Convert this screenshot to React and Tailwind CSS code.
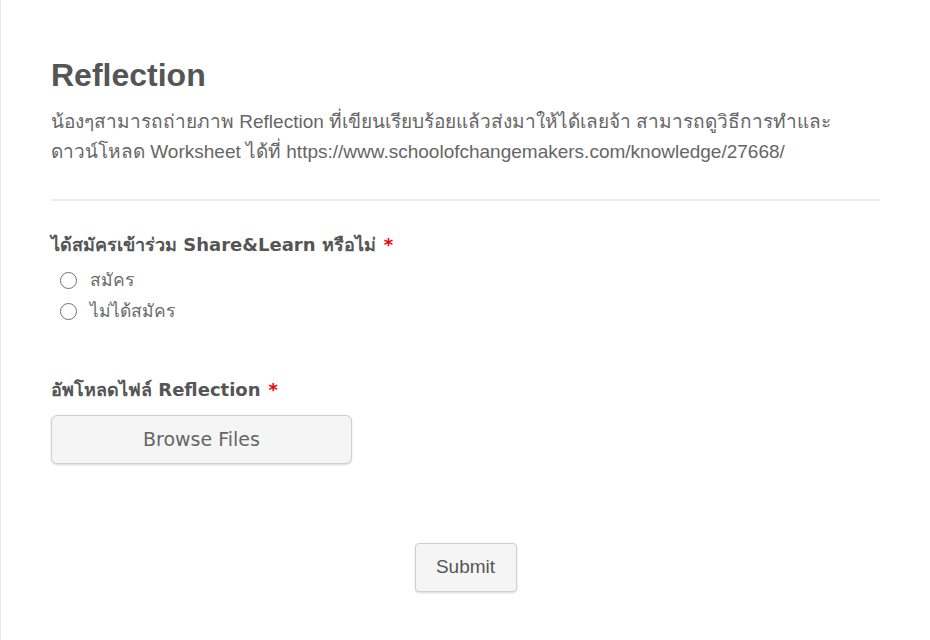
import React from "react";

const dotted =
  "bg-[#f5f5f5] bg-[radial-gradient(#ebebeb_0.7px,transparent_0.7px)] bg-[length:4px_4px]";

function Radio({ label }) {
  return (
    <label className="flex items-center h-[31px] cursor-pointer">
      <span className="ml-[9px] w-[17px] h-[17px] rounded-full border-[1.5px] border-[#6f6f6f] bg-white" />
      <span className="ml-[13px] text-[17.5px] text-[#6a6a6a] font-['DejaVu_Sans',sans-serif]">
        {label}
      </span>
    </label>
  );
}

function Required() {
  return <span className="ml-[8px] text-[#f20000]">*</span>;
}

export default function App() {
  return (
    <div className="min-h-[640px] bg-white border-l border-[#e8e8e8] font-['Liberation_Sans',sans-serif]">
      <div className="pl-[50px] pr-[50px] pt-[56px] pb-[50px]">

        {/* Header */}
        <h1 className="text-[32px] leading-[38px] font-bold text-[#555]">
          Reflection
        </h1>
        <p className="mt-[13px] text-[19px] leading-[30px] text-[#666]">
          น้องๆสามารถถ่ายภาพ Reflection ที่เขียนเรียบร้อยแล้วส่งมาให้ได้เลยจ้า สามารถดูวิธีการทำและ
          <br />
          ดาวน์โหลด Worksheet ได้ที่ https://www.schoolofchangemakers.com/knowledge/27668/
        </p>

        <div className="mt-[32px] h-[2px] bg-[#ebebeb]" />

        {/* Share&Learn */}
        <div className="mt-[32px] text-[18px] leading-[24px] font-bold text-[#555] font-['DejaVu_Sans',sans-serif]">
          ได้สมัครเข้าร่วม Share&Learn หรือไม่
          <Required />
        </div>
        <div className="mt-[8px]">
          <Radio label="สมัคร" />
          <Radio label="ไม่ได้สมัคร" />
        </div>

        {/* Upload */}
        <div className="mt-[51px] text-[18px] leading-[24px] font-bold text-[#555] font-['DejaVu_Sans',sans-serif]">
          อัพโหลดไฟล์ Reflection
          <Required />
        </div>
        <button
          className={`mt-[13px] w-[301px] h-[49px] rounded-[6px] border border-[#cfcfcf] shadow-[0_1px_2px_rgba(0,0,0,0.15)] text-[19px] text-[#666] font-['DejaVu_Sans',sans-serif] ${dotted}`}
        >
          Browse Files
        </button>

        {/* Submit */}
        <div className="mt-[79px] flex justify-center">
          <button
            className={`w-[102px] h-[49px] rounded-[4px] border border-[#cfcfcf] shadow-[0_1px_2px_rgba(0,0,0,0.15)] text-[19px] text-[#555] ${dotted}`}
          >
            Submit
          </button>
        </div>

      </div>
    </div>
  );
}
